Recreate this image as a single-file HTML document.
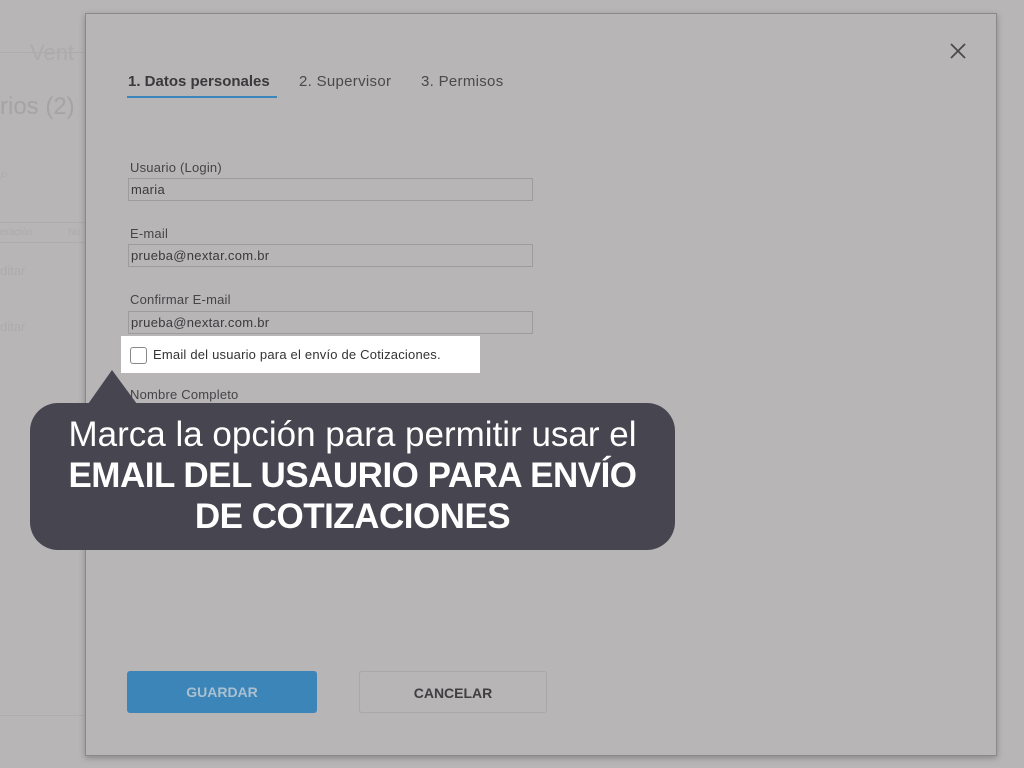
<!DOCTYPE html>
<html><head><meta charset="utf-8"><style>
*{margin:0;padding:0;box-sizing:border-box}
body{width:1024px;height:768px;background:#b7b5b6;position:relative;overflow:hidden;font-family:"Liberation Sans",sans-serif;color:#3a393b}
.bg{position:absolute;color:#adabac}
.modal{position:absolute;left:85px;top:13px;width:912px;height:743px;background:#b7b5b6;border:1px solid #8a898a;box-shadow:0 2px 6px rgba(0,0,0,.25)}
.tab{position:absolute;top:73px;font-size:15px;color:#4a494b;letter-spacing:0.3px}
.lbl{position:absolute;left:130px;font-size:13px;color:#454446;letter-spacing:0.2px}
.inp{position:absolute;left:128px;width:405px;height:23px;border:1px solid #9d9c9d;font-size:13px;padding:3px 2px;color:#3a393b;letter-spacing:0.3px}
.btn{position:absolute;top:671px;height:42px;border-radius:3px;font-size:14px;font-weight:bold;text-align:center;line-height:42px}
</style></head><body>
<div class="bg" style="left:30px;top:40px;font-size:22px">Vent</div>
<div style="position:absolute;left:0;top:52px;width:85px;height:1px;background:#aeacad"></div>
<div class="bg" style="left:0;top:93px;font-size:24px;color:#a5a3a4">rios (2)</div>
<div class="bg" style="left:0;top:166px;font-size:16px">⌕</div>
<div class="bg" style="left:0;top:227px;font-size:10px">eración</div>
<div class="bg" style="left:68px;top:227px;font-size:10px">No</div>
<div style="position:absolute;left:0;top:222px;width:85px;height:1px;background:#aeacad"></div>
<div style="position:absolute;left:0;top:242px;width:85px;height:1px;background:#aeacad"></div>
<div class="bg" style="left:0;top:263px;font-size:13px">ditar</div>
<div class="bg" style="left:0;top:319px;font-size:13px">ditar</div>
<div style="position:absolute;left:0;top:715px;width:85px;height:1px;background:#aeacad"></div>
<div class="modal"></div>
<svg style="position:absolute;left:949px;top:42px" width="18" height="18"><path d="M2 2L16 16M16 2L2 16" stroke="#4a494b" stroke-width="1.8"/></svg>
<div class="tab" style="left:128px;font-weight:bold;color:#3a393b;letter-spacing:0">1. Datos personales</div>
<div style="position:absolute;left:127px;top:96px;width:150px;height:2px;background:#3c86bb"></div>
<div class="tab" style="left:299px">2. Supervisor</div>
<div class="tab" style="left:421px">3. Permisos</div>
<div class="lbl" style="top:160px">Usuario (Login)</div>
<div class="inp" style="top:178px">maria</div>
<div class="lbl" style="top:226px">E-mail</div>
<div class="inp" style="top:244px">prueba@nextar.com.br</div>
<div class="lbl" style="top:292px">Confirmar E-mail</div>
<div class="inp" style="top:311px">prueba@nextar.com.br</div>
<div style="position:absolute;left:121px;top:336px;width:359px;height:37px;background:#fff"></div>
<div style="position:absolute;left:130px;top:347px;width:17px;height:17px;border:1px solid #888;border-radius:3px;background:#fff"></div>
<div style="position:absolute;left:153px;top:347px;font-size:13px;color:#333;letter-spacing:0.2px">Email del usuario para el envío de Cotizaciones.</div>
<div class="lbl" style="top:387px">Nombre Completo</div>
<svg style="position:absolute;left:86px;top:369px" width="54" height="36"><path d="M2 35L26 1L51 35Z" fill="#474650"/></svg>
<div style="position:absolute;left:30px;top:403px;width:645px;height:147px;background:#474650;border-radius:28px;color:#fff;text-align:center;font-size:35px;line-height:41px;padding-top:11px;white-space:nowrap">Marca la opción para permitir usar el<br><b style="letter-spacing:-0.5px">EMAIL DEL USAURIO PARA ENVÍO<br>DE COTIZACIONES</b></div>
<div class="btn" style="left:127px;width:190px;background:#3c85b8;color:#a9c0d0">GUARDAR</div>
<div class="btn" style="left:359px;width:188px;border:1px solid #a9a7a8;color:#3f3e40">CANCELAR</div>
</body></html>
